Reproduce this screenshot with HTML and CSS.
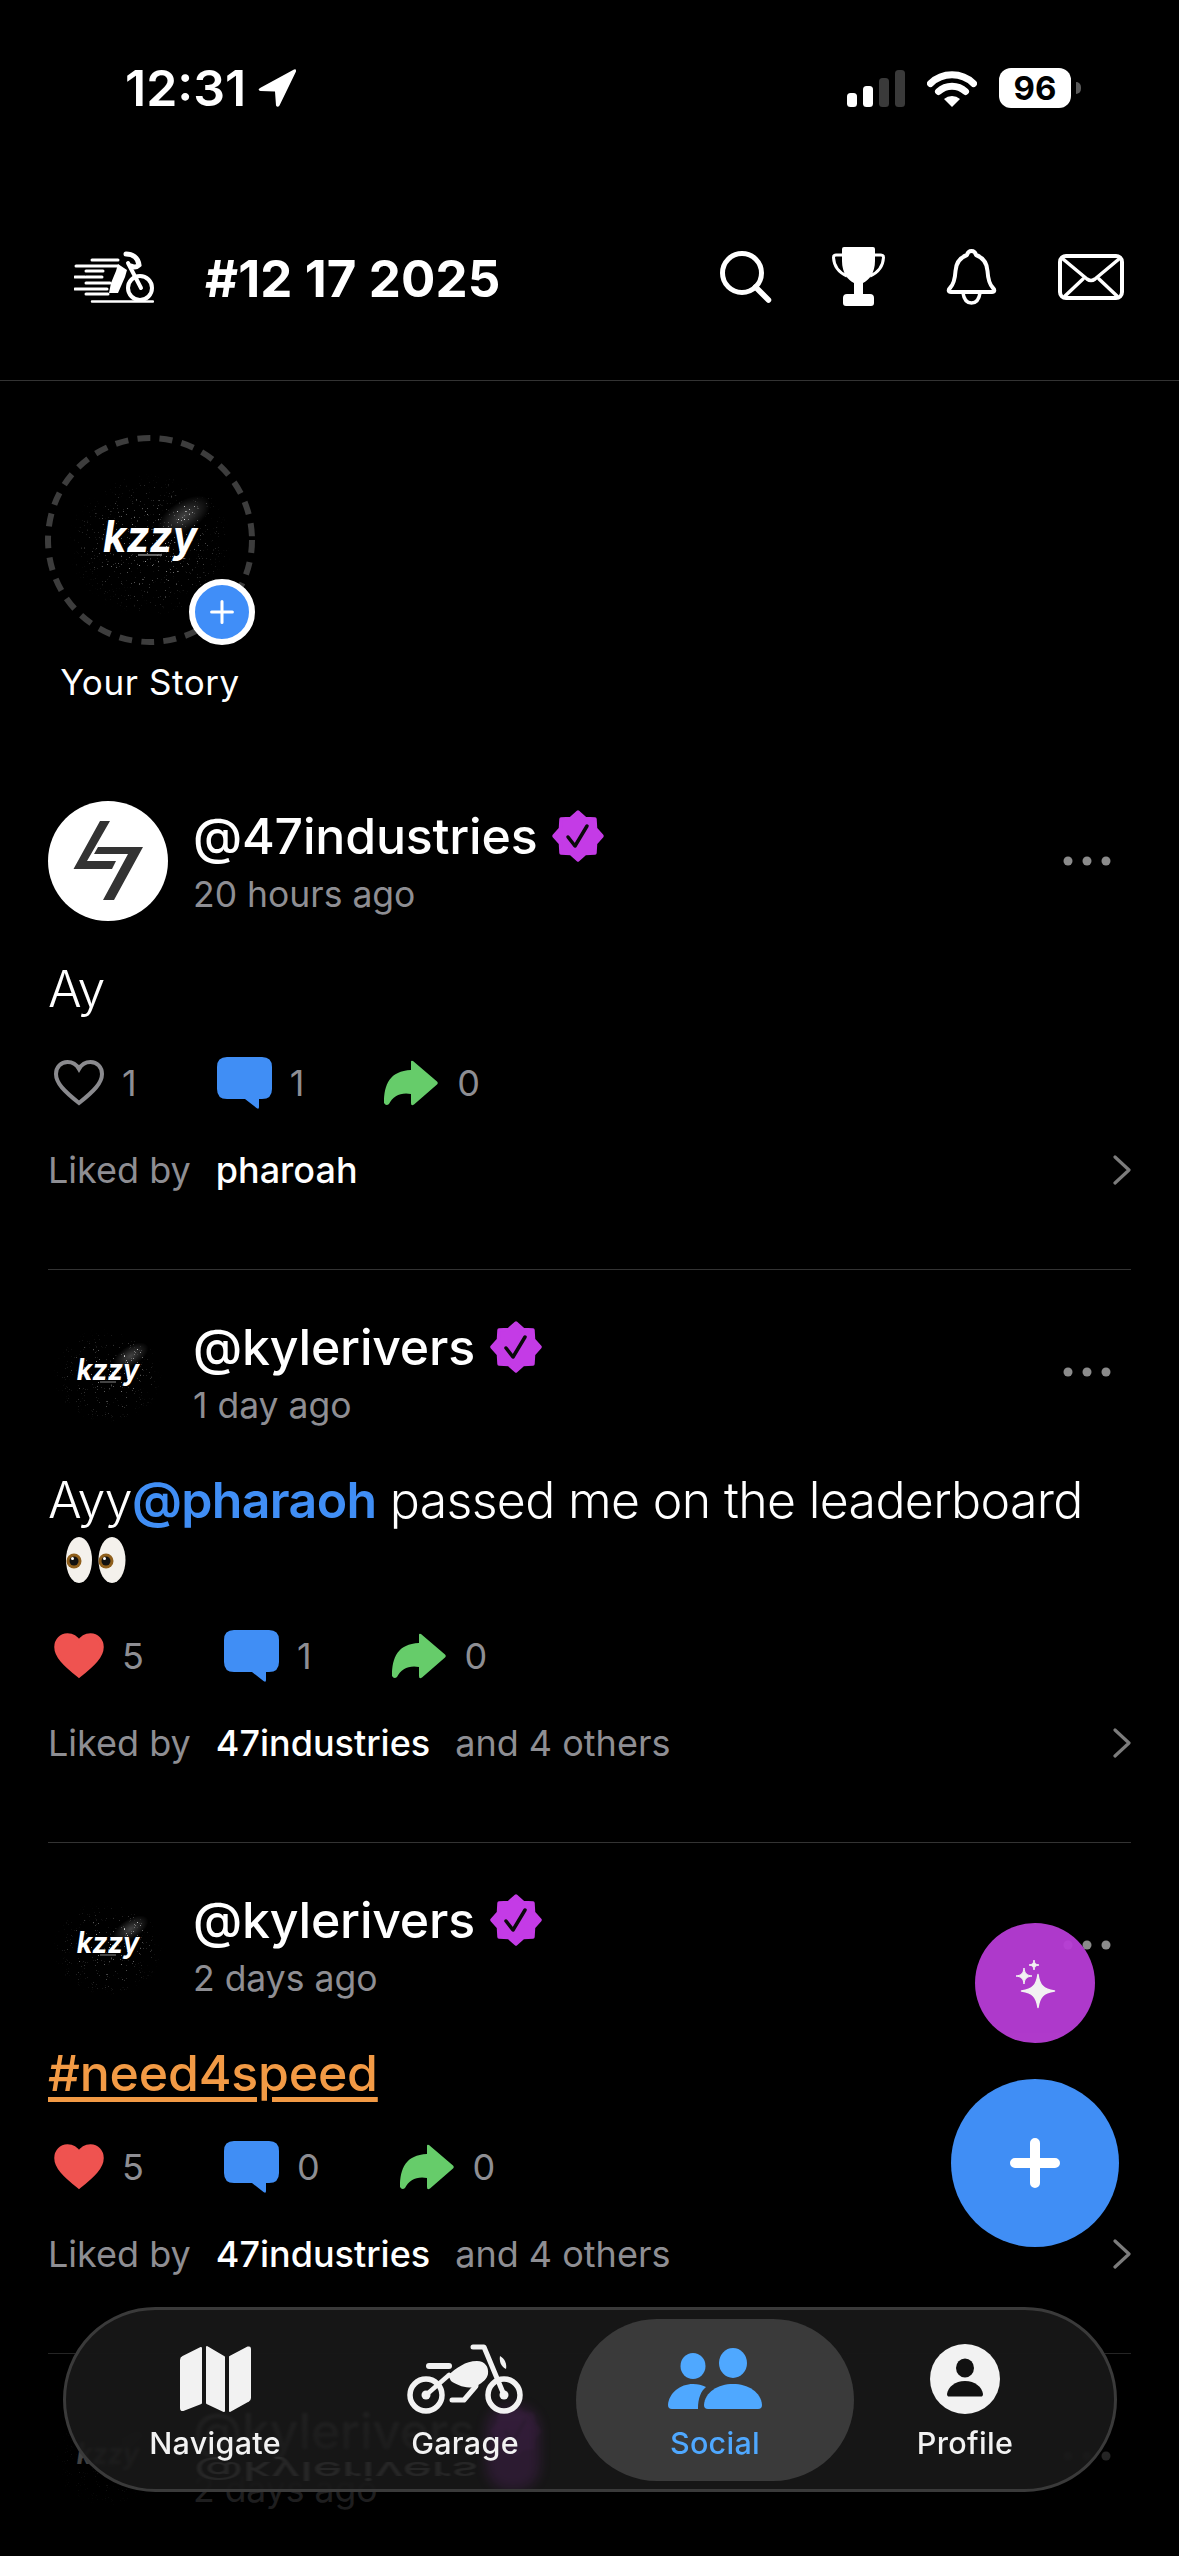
FILE: index.html
```html
<!DOCTYPE html>
<html lang="en">
<head>
<meta charset="utf-8">
<title>Social</title>
<link rel="stylesheet" href="styles.css">
</head>
<body>
<svg class="defs" width="0" height="0" aria-hidden="true">
  <defs>
    <filter id="speck" x="0" y="0" width="100%" height="100%">
      <feTurbulence type="fractalNoise" baseFrequency="0.62" numOctaves="2" seed="7"/>
      <feColorMatrix type="matrix" values="0 0 0 0 1  0 0 0 0 1  0 0 0 0 1  11 0 0 0 -7.6"/>
    </filter>
    <radialGradient id="fadeMain"><stop offset="0" stop-color="#fff"/><stop offset=".6" stop-color="#777"/><stop offset="1" stop-color="#000"/></radialGradient>
    <radialGradient id="fadeNeb"><stop offset="0" stop-color="#fff"/><stop offset=".5" stop-color="#999"/><stop offset="1" stop-color="#000" stop-opacity="0"/></radialGradient>
    <radialGradient id="cloud"><stop offset="0" stop-color="#fff" stop-opacity=".26"/><stop offset="1" stop-color="#fff" stop-opacity="0"/></radialGradient>
    <mask id="speckMask" maskUnits="userSpaceOnUse" x="0" y="0" width="180" height="180">
      <ellipse cx="90" cy="95" rx="82" ry="72" fill="url(#fadeMain)" opacity=".75"/>
      <ellipse cx="124" cy="66" rx="38" ry="22" transform="rotate(-32 124 66)" fill="url(#fadeNeb)"/>
      <ellipse cx="78" cy="113" rx="18" ry="14" fill="url(#fadeNeb)" opacity=".8"/>
    </mask>
    <symbol id="kzzy" viewBox="0 0 180 180">
      <rect width="180" height="180" fill="#000"/>
      <ellipse cx="124" cy="66" rx="30" ry="15" transform="rotate(-32 124 66)" fill="url(#cloud)"/>
      <rect width="180" height="180" filter="url(#speck)" mask="url(#speckMask)"/>
      <text x="43" y="102" textLength="94" lengthAdjust="spacingAndGlyphs" fill="#fff" font-family="Inter, sans-serif" font-size="44" font-weight="700" font-style="italic">kzzy</text>
      <path d="M78 105H102" stroke="#ccc" stroke-width="1"/>
    </symbol>
    <symbol id="badge" viewBox="0 0 54 54">
      <path d="M27 3 34.27 9.45 43.97 10.03 44.55 19.73 51 27 44.55 34.27 43.97 43.97 34.27 44.55 27 51 19.73 44.55 10.03 43.97 9.45 34.27 3 27 9.45 19.73 10.03 10.03 19.73 9.45Z" fill="#C43BE6" stroke="#C43BE6" stroke-width="3.500" stroke-linejoin="round"/>
      <path d="M17 28 24 37 36 17" fill="none" stroke="#0a0a0a" stroke-width="3.500" stroke-linecap="round" stroke-linejoin="round"/>
    </symbol>
    <symbol id="heart" viewBox="0 0 50 46">
      <path d="M25 43C10 31 2 23 2 14 2 7 7 2 13.5 2 18 2 22.5 4.5 25 9 27.5 4.5 32 2 36.5 2 43 2 48 7 48 14 48 23 40 31 25 43Z"/>
    </symbol>
    <symbol id="bubble" viewBox="0 0 55 52">
      <path d="M10 0H45Q55 0 55 10V32Q55 42 45 42H42V50Q42 53 39.5 51L28 42H10Q0 42 0 32V10Q0 0 10 0Z"/>
    </symbol>
    <symbol id="share" viewBox="0 0 55 46">
      <path d="M0 43C0 24 6 11 27 10V2Q27 0 29 1L53 21.500Q54.500 23 53 24.500L30 44.500Q27 46.500 27 43V34C17 32 9 36 5 44Q2 46.500 0 43Z"/>
    </symbol>
    <symbol id="dots" viewBox="0 0 48 10">
      <circle cx="5" cy="5" r="4.500"/><circle cx="24" cy="5" r="4.500"/><circle cx="43" cy="5" r="4.500"/>
    </symbol>
    <symbol id="chev" viewBox="0 0 18 30">
      <path d="M2 2 16 15 2 28" fill="none" stroke="currentColor" stroke-width="3.200" stroke-linecap="round" stroke-linejoin="round"/>
    </symbol>
  </defs>
</svg>

<div class="screen">
  <div class="status">
    <div class="status-left">
      <span class="time">12:31</span>
      <svg class="loc" viewBox="0 0 40 40"><path d="M37 1.500 3 20Q0 22 3.500 23L18 23.500 19 37.500Q20.500 40 22.500 37.500L39 3.500Q39.500 .5 37 1.500Z" fill="#fff"/></svg>
    </div>
    <div class="status-right">
      <svg class="signal" viewBox="0 0 58 37"><rect x="0" y="23" width="10" height="14" rx="3.500" fill="#fff"/><rect x="16" y="16" width="10" height="21" rx="3.500" fill="#fff"/><rect x="32" y="8" width="10" height="29" rx="3.500" fill="#3a3a3a"/><rect x="48" y="0" width="10" height="37" rx="3.500" fill="#3a3a3a"/></svg>
      <svg class="wifi" viewBox="0 0 50 37"><path d="M3.500 13.500A31 31 0 0 1 46.500 13.500M11.500 21.500A20 20 0 0 1 38.500 21.500" fill="none" stroke="#fff" stroke-width="7" stroke-linecap="round"/><path d="M25 37 17 29A12 12 0 0 1 33 29Z" fill="#fff"/></svg>
      <div class="battery"><span class="battery-cell">96</span><span class="battery-nub"></span></div>
    </div>
  </div>

  <header class="topbar">
    <svg class="logo" viewBox="14 17 80 54" fill="none" stroke="#fff" stroke-linecap="round">
      <path d="M32 27H58M16 33H58M15 44H25M26 38H43M26 44H42M26 50H50M15 56H47M26 61H48" stroke-width="3"/>
      <path d="M32 68.500H93" stroke-width="2.500"/>
      <path d="M58 31 67 37 65 44 58 60H49L51 50 56 38Z" fill="#fff" stroke="none"/>
      <path d="M66 21C72 21 78 24 79 32 76 35 73 34 71 33" stroke-width="5"/>
      <path d="M68 30 81 55" stroke-width="4"/>
      <circle cx="80" cy="55" r="12" stroke-width="4"/>
    </svg>
    <h1 class="title">#12 17 2025</h1>
    <div class="top-actions">
      <svg class="ic-search" viewBox="0 0 52 52" fill="none" stroke="#fff" stroke-linecap="round"><circle cx="22" cy="22" r="19.500" stroke-width="5"/><path d="M35.500 36 48.500 49" stroke-width="5.500"/></svg>
      <svg class="ic-trophy" viewBox="0 0 54 60"><path d="M10 2Q10 0 12 0H41Q43 0 43 2V14C43 26 37 33 31 36V47H38Q42 47 42 51V56Q42 59 39 59H14Q11 59 11 56V51Q11 47 15 47H22V36C16 33 10 26 10 14Z" fill="#fff"/><path d="M11 8H4Q1.500 8 1.500 10.500C2 20 8 26 15 29M42 8H49Q51.500 8 51.500 10.500C51 20 45 26 38 29" fill="none" stroke="#fff" stroke-width="3"/></svg>
      <svg class="ic-bell" viewBox="0 0 52 56" fill="none" stroke="#fff" stroke-linejoin="round"><path d="M25.500 2C28 2 29.500 4 30 6 37 8.500 41 14 41.500 22 42 30 43 35 47 39 49 41 48.500 43 46 43H5C2.500 43 2 41 4 39 8 35 9 30 9.500 22 10 14 14 8.500 21 6 21.500 4 23 2 25.500 2Z" stroke-width="4"/><path d="M17 44C18 51 21 54 25.500 54 30 54 33 51 34 44" stroke-width="3.500"/></svg>
      <svg class="ic-mail" viewBox="0 0 66 46" fill="none" stroke="#fff" stroke-linecap="round" stroke-linejoin="round"><rect x="2" y="2" width="62" height="42" rx="6" stroke-width="4"/><path d="M5 5 29 25Q33 28 37 25L61 5M7 42 25 25M59 42 41 25" stroke-width="3.500"/></svg>
    </div>
  </header>

  <section class="stories">
    <div class="story">
      <div class="story-ring">
        <svg class="ring" viewBox="0 0 210 210"><circle cx="105" cy="105" r="102" fill="none" stroke="#3d3d3d" stroke-width="6" stroke-dasharray="13 9.250"/></svg>
        <svg class="story-avatar"><use href="#kzzy"/></svg>
        <span class="story-add"><svg viewBox="0 0 30 30" fill="none" stroke="#fff" stroke-width="3.500" stroke-linecap="round"><path d="M15 3V27M3 15H27"/></svg></span>
      </div>
      <span class="story-label">Your Story</span>
    </div>
  </section>

  <main class="feed">
    <article class="post first">
      <div class="post-head">
        <span class="avatar avatar-47"><svg viewBox="0 0 120 120"><path d="M52 20H62L39 60H68L64 68H25.500Z M50 46H95L66 99H55L80 53H46Z" fill="#333"/></svg></span>
        <div class="who">
          <div class="name-row"><span class="name">@47industries</span><svg class="badge"><use href="#badge"/></svg></div>
          <span class="ago">20 hours ago</span>
        </div>
        <svg class="more"><use href="#dots"/></svg>
      </div>
      <p class="body">Ay</p>
      <div class="stats">
        <div class="stat"><svg class="i-heart outline"><use href="#heart"/></svg><span>1</span></div>
        <div class="stat"><svg class="i-bubble"><use href="#bubble"/></svg><span>1</span></div>
        <div class="stat"><svg class="i-share"><use href="#share"/></svg><span>0</span></div>
      </div>
      <div class="likes"><span class="muted">Liked by</span><span class="liker">pharoah</span><svg class="chev"><use href="#chev"/></svg></div>
    </article>

    <article class="post">
      <div class="post-head">
        <span class="avatar"><svg><use href="#kzzy"/></svg></span>
        <div class="who">
          <div class="name-row"><span class="name">@kylerivers</span><svg class="badge"><use href="#badge"/></svg></div>
          <span class="ago">1 day ago</span>
        </div>
        <svg class="more"><use href="#dots"/></svg>
      </div>
      <p class="body">Ayy<a class="mention">@pharaoh</a> passed me on the leaderboard<br>
        <svg class="eyes" viewBox="0 0 60 46" role="img" aria-label="eyes"><ellipse cx="13" cy="23" rx="13" ry="23" fill="#f4f1ec"/><ellipse cx="46" cy="23" rx="13.500" ry="23" fill="#f4f1ec"/><circle cx="8" cy="24" r="7.500" fill="#8f5f1c"/><circle cx="8" cy="24" r="4.500" fill="#111"/><circle cx="40" cy="24" r="7.500" fill="#8f5f1c"/><circle cx="40" cy="24" r="4.500" fill="#111"/><circle cx="6.500" cy="21.500" r="1.500" fill="#fff"/><circle cx="38.500" cy="21.500" r="1.500" fill="#fff"/></svg></p>
      <div class="stats">
        <div class="stat"><svg class="i-heart filled"><use href="#heart"/></svg><span>5</span></div>
        <div class="stat"><svg class="i-bubble"><use href="#bubble"/></svg><span>1</span></div>
        <div class="stat"><svg class="i-share"><use href="#share"/></svg><span>0</span></div>
      </div>
      <div class="likes"><span class="muted">Liked by</span><span class="liker">47industries</span><span class="muted">and 4 others</span><svg class="chev"><use href="#chev"/></svg></div>
    </article>

    <article class="post">
      <div class="post-head">
        <span class="avatar"><svg><use href="#kzzy"/></svg></span>
        <div class="who">
          <div class="name-row"><span class="name">@kylerivers</span><svg class="badge"><use href="#badge"/></svg></div>
          <span class="ago">2 days ago</span>
        </div>
        <svg class="more"><use href="#dots"/></svg>
      </div>
      <p class="body"><a class="hashtag">#need4speed</a></p>
      <div class="stats">
        <div class="stat"><svg class="i-heart filled"><use href="#heart"/></svg><span>5</span></div>
        <div class="stat"><svg class="i-bubble"><use href="#bubble"/></svg><span>0</span></div>
        <div class="stat"><svg class="i-share"><use href="#share"/></svg><span>0</span></div>
      </div>
      <div class="likes"><span class="muted">Liked by</span><span class="liker">47industries</span><span class="muted">and 4 others</span><svg class="chev"><use href="#chev"/></svg></div>
    </article>

    <article class="post">
      <div class="post-head">
        <span class="avatar"><svg><use href="#kzzy"/></svg></span>
        <div class="who">
          <div class="name-row"><span class="name">@kylerivers</span><svg class="badge"><use href="#badge"/></svg></div>
          <span class="ago">2 days ago</span>
        </div>
        <svg class="more"><use href="#dots"/></svg>
      </div>
    </article>
  </main>

  <div class="bottom-fade"></div>

  <button class="fab fab-ai" aria-label="AI">
    <svg viewBox="0 0 120 120" fill="#fff">
      <path d="M63 51.500C64.500 62 68 66.500 79.500 68 68 69.500 64.500 74 63 84.500 61.500 74 58 69.500 46.500 68 58 66.500 61.500 62 63 51.500Z" stroke="#fff" stroke-width="1.500" stroke-linejoin="round"/>
      <path d="M49 45C49.800 50.500 51.500 52.200 57 53 51.500 53.800 49.800 55.500 49 61 48.200 55.500 46.500 53.800 41 53 46.500 52.200 48.200 50.500 49 45Z" stroke="#fff" stroke-linejoin="round"/>
      <path d="M59 37C59.500 40.500 60.500 41.500 64 42 60.500 42.500 59.500 43.500 59 47 58.500 43.500 57.500 42.500 54 42 57.500 41.500 58.500 40.500 59 37Z" stroke="#fff" stroke-linejoin="round"/>
    </svg>
  </button>
  <button class="fab fab-add" aria-label="New post">
    <svg viewBox="0 0 168 168" fill="none" stroke="#fff" stroke-width="10" stroke-linecap="round"><path d="M84 64V104M64 84H104"/></svg>
  </button>

  <nav class="tabbar">
    <span class="ghost-tint" aria-hidden="true"></span>
    <span class="ghost-flip" aria-hidden="true">@kylerivers</span>
    <a class="tab">
      <span class="tab-icon"><svg class="t-map" viewBox="0 0 71 66" fill="#f2f2f2" stroke="#f2f2f2" stroke-width="2" stroke-linejoin="round"><path d="M21 2V57L3 64Q1 64.500 1 62V14Q1 12 3 11Z"/><path d="M27 1 44 11V65L27 57Z"/><path d="M50 11 68 1.500Q70 1 70 3V52Q70 54 68 55L50 65Z"/></svg></span>
      <span class="tab-label">Navigate</span>
    </a>
    <a class="tab">
      <span class="tab-icon"><svg class="t-bike" viewBox="0 0 116 70" fill="none" stroke="#f2f2f2" stroke-linecap="round" stroke-linejoin="round">
        <circle cx="19" cy="51" r="16" stroke-width="5.500"/><circle cx="97" cy="51" r="16" stroke-width="5.500"/>
        <circle cx="19" cy="51" r="4.500" fill="#f2f2f2" stroke="none"/><circle cx="97" cy="51" r="4.500" fill="#f2f2f2" stroke="none"/>
        <path d="M22 22H42" stroke-width="6"/>
        <path d="M19 51 42 31" stroke-width="4.500"/>
        <path d="M41 31C50 24 58 17 70 17 78 17 82 23 81 30 80 35 76 38 70 42 60 46 50 41 44 37Z" fill="#f2f2f2" stroke="none"/>
        <path d="M45 56H57L69 42" stroke-width="5"/>
        <path d="M66 3H77L97 51" stroke-width="5"/>
        <path d="M93 12C98 15 100 20 99 25 94 23 92 17 93 12Z" fill="#f2f2f2" stroke="none"/>
      </svg></span>
      <span class="tab-label">Garage</span>
    </a>
    <a class="tab active">
      <span class="tab-icon"><svg class="t-people" viewBox="0 0 94 62" fill="#4FA8FF"><ellipse cx="25" cy="18" rx="12.500" ry="13"/><ellipse cx="65" cy="15" rx="14" ry="15"/><path d="M36 57C37 44 50 36 65 36 80 36 93 44 94 57Q94 61 90 61H40Q36 61 36 57Z"/><path d="M0 57C1 45 12 36 25 36 30 36 34 37 38 39 33 43 30 50 30 61H4Q0 61 0 57Z"/></svg></span>
      <span class="tab-label">Social</span>
    </a>
    <a class="tab">
      <span class="tab-icon"><svg class="t-profile" viewBox="0 0 70 70"><circle cx="35" cy="35" r="35" fill="#f2f2f2"/><ellipse cx="35" cy="24" rx="9" ry="9.500" fill="#111"/><path d="M17 50C18 43 25 37 35 37 45 37 52 43 53 50 53 52 52 52.500 51 52.500H19C18 52.500 17 52 17 50Z" fill="#111"/></svg></span>
      <span class="tab-label">Profile</span>
    </a>
  </nav>
</div>
</body>
</html>
```

FILE: styles.css
```css
* { box-sizing: border-box; }

html, body {
  margin: 0;
  padding: 0;
  background: #000;
}

body {
  font-family: Inter, "Noto Sans", "Liberation Sans", sans-serif;
  color: #fff;
}

.defs { position: absolute; }

svg { display: block; flex: none; }

.screen {
  position: relative;
  width: 1179px;
  height: 2556px;
  overflow: hidden;
  background: #000;
}

/* status bar */
.status {
  height: 175px;
  padding: 68px 98px 0 125px;
  display: flex;
  justify-content: space-between;
  align-items: flex-start;
}

.status-left,
.status-right {
  display: flex;
  align-items: center;
  height: 40px;
}

.status-left { gap: 11px; }
.status-right { gap: 22px; }

.time {
  font-size: 50px;
  line-height: 40px;
  font-weight: 600;
}

.loc { width: 40px; height: 40px; }
.signal { width: 58px; height: 37px; margin-top: 1px; }
.wifi { width: 50px; height: 37px; margin-top: 1px; }

.battery {
  display: flex;
  align-items: center;
  gap: 5px;
}

.battery-cell {
  width: 72px;
  height: 40px;
  border-radius: 12px;
  background: #fff;
  color: #000;
  font-size: 33px;
  font-weight: 700;
  line-height: 40px;
  text-align: center;
}

.battery-nub {
  width: 5px;
  height: 12px;
  border-radius: 0 6px 6px 0;
  background: #5a5a5a;
}

/* top bar */
.topbar {
  height: 206px;
  padding: 0 55px 2px 74px;
  display: flex;
  align-items: center;
  border-bottom: 1px solid #333;
}

.logo { width: 80px; height: 54px; }

.title {
  margin: 5px 0 0 51px;
  font-size: 51px;
  line-height: 60px;
  font-weight: 700;
  letter-spacing: 0.1px;
}

.top-actions {
  margin-left: auto;
  display: flex;
  align-items: center;
  gap: 60px;
}

.ic-search { width: 52px; height: 52px; }
.ic-trophy { width: 54px; height: 60px; }
.ic-bell { width: 52px; height: 56px; }
.ic-mail { width: 66px; height: 46px; }

/* stories */
.stories {
  padding: 54px 0 0 45px;
  height: 377px;
}

.story {
  width: 210px;
  display: flex;
  flex-direction: column;
  align-items: center;
  gap: 15px;
}

.story-ring {
  position: relative;
  width: 210px;
  height: 210px;
  display: flex;
  align-items: center;
  justify-content: center;
}

.ring {
  position: absolute;
  inset: 0;
  width: 210px;
  height: 210px;
}

.story-avatar { width: 180px; height: 180px; }

.story-add {
  position: absolute;
  right: 0;
  bottom: 0;
  width: 66px;
  height: 66px;
  border-radius: 50%;
  background: #408EF8;
  border: 6px solid #fff;
  display: flex;
  align-items: center;
  justify-content: center;
}

.story-add svg { width: 26px; height: 26px; }

.story-label {
  font-size: 35px;
  line-height: 44px;
  font-weight: 400;
  letter-spacing: 0.6px;
  white-space: nowrap;
}

/* posts */
.post {
  margin: 0 48px;
  padding: 42px 0 77px;
  border-top: 1px solid #333;
}

.post.first {
  border-top: 0;
  padding-top: 43px;
}

.post-head {
  display: flex;
  align-items: center;
  gap: 25px;
  height: 120px;
}

.avatar {
  width: 120px;
  height: 120px;
  border-radius: 50%;
  overflow: hidden;
  flex: none;
  background: #000;
}

.avatar svg { width: 120px; height: 120px; }
.avatar-47 { background: #fff; }

.who {
  display: flex;
  flex-direction: column;
  min-width: 0;
}

.name-row {
  display: flex;
  align-items: center;
  gap: 14px;
  height: 60px;
}

.name {
  font-size: 50px;
  line-height: 60px;
  font-weight: 500;
  letter-spacing: -0.2px;
}

.badge { width: 54px; height: 54px; }

.ago {
  margin-top: 7px;
  font-size: 35.5px;
  line-height: 44px;
  font-weight: 400;
  color: #8e8e93;
}

.more {
  width: 48px;
  height: 10px;
  margin-left: auto;
  margin-right: 20px;
  fill: #8b8b8b;
}

.body {
  margin: 38px 0 0;
  font-size: 50px;
  line-height: 60px;
  font-weight: 350;
  letter-spacing: -0.65px;
}

.mention {
  color: #408EF5;
  font-weight: 600;
}

.hashtag {
  color: #F29A45;
  font-weight: 500;
  letter-spacing: -0.2px;
  text-decoration: underline;
  text-decoration-thickness: 5px;
  text-underline-offset: 6px;
}

.eyes {
  width: 78px;
  height: 62px;
  padding: 7px 0 9px 18px;
}

.stats {
  margin-top: 38px;
  height: 52px;
  padding-left: 6px;
  display: flex;
  align-items: center;
  gap: 80px;
}

.stat {
  display: flex;
  align-items: center;
  gap: 18px;
  font-size: 36px;
  line-height: 52px;
  color: #8e8e93;
}

.i-heart { width: 50px; height: 46px; }
.i-bubble { width: 55px; height: 52px; }
.i-share { width: 55px; height: 46px; fill: #66CC6A; }

.i-bubble { fill: #408EF5; }
.filled { fill: #EF5350; stroke: #EF5350; stroke-width: 3.5; }
.outline { fill: none; stroke: #8a8a8e; stroke-width: 4; }

.likes {
  margin-top: 39px;
  height: 44px;
  display: flex;
  align-items: center;
  gap: 25px;
  font-size: 36px;
  line-height: 44px;
}

.muted { color: #8e8e93; font-weight: 400; }
.liker { color: #fff; font-weight: 500; }

.chev {
  width: 18px;
  height: 30px;
  margin-left: auto;
  color: #7c7c7c;
}

/* overlays */
.bottom-fade {
  position: absolute;
  left: 0;
  right: 0;
  bottom: 0;
  height: 256px;
  background: linear-gradient(to bottom, rgba(0, 0, 0, 0), rgba(0, 0, 0, 0.72) 55%, rgba(0, 0, 0, 0.85));
}

.fab {
  position: absolute;
  padding: 0;
  border: 0;
  border-radius: 50%;
}

.fab svg { width: 100%; height: 100%; }

.fab-ai {
  left: 975px;
  top: 1923px;
  width: 120px;
  height: 120px;
  background: #B83DD6;
  opacity: 0.95;
}

.fab-add {
  left: 951px;
  top: 2079px;
  width: 168px;
  height: 168px;
  background: #408EF5;
}

/* tab bar */
.tabbar {
  position: absolute;
  left: 63px;
  top: 2307px;
  width: 1054px;
  height: 185px;
  padding: 9px 24px 8px;
  border: 3px solid #3a3a3a;
  border-radius: 93px;
  background: rgba(24, 24, 24, 0.9);
  backdrop-filter: blur(1.5px);
  display: grid;
  grid-template-columns: repeat(4, 250px);
  overflow: hidden;
}

.tab {
  position: relative;
  display: flex;
  flex-direction: column;
  align-items: center;
  padding-top: 25px;
  color: #f2f2f2;
}

.tab-icon {
  position: relative;
  height: 70px;
  display: flex;
  align-items: center;
  justify-content: center;
}

.tab-label {
  position: relative;
  margin-top: 9px;
  font-size: 30.5px;
  line-height: 40px;
  font-weight: 500;
  letter-spacing: 0.3px;
}

.tab.active { color: #4FA8FF; }

.tab.active::before {
  content: "";
  position: absolute;
  inset: 0 -14px;
  border-radius: 81px;
  background: #3a3a3a;
}

.t-map { width: 71px; height: 66px; }
.t-bike { width: 116px; height: 70px; }
.t-people { width: 94px; height: 62px; }
.t-profile { width: 70px; height: 70px; }

.ghost-flip {
  position: absolute;
  left: 128px;
  top: 146px;
  font-size: 50px;
  line-height: 30px;
  font-weight: 500;
  color: rgba(255, 255, 255, 0.07);
  transform: scaleY(-0.5);
  filter: blur(1px);
}

.ghost-tint {
  position: absolute;
  left: 420px;
  top: 95px;
  width: 54px;
  height: 85px;
  border-radius: 24px;
  background: rgba(196, 59, 230, 0.13);
  filter: blur(6px);
}
```
